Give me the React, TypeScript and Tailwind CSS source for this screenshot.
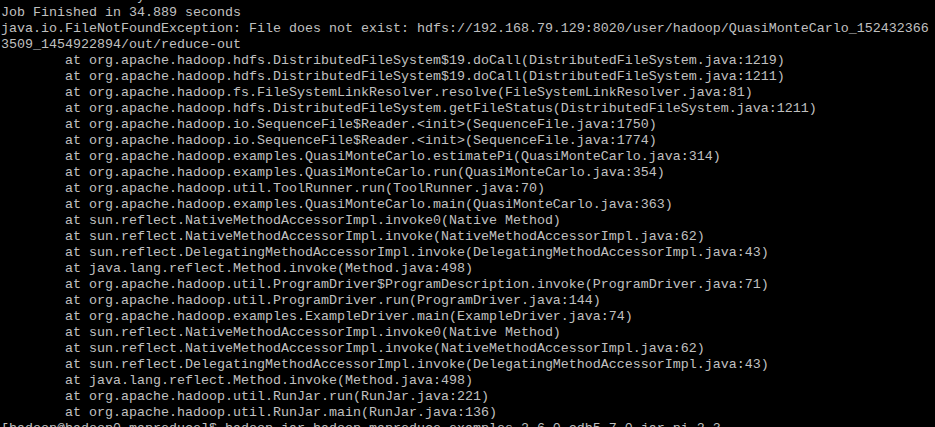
import React from "react";

const T = "        ";
const lines: string[] = [
  "Job Finished in 34.889 seconds",
  "java.io.FileNotFoundException: File does not exist: hdfs://192.168.79.129:8020/user/hadoop/QuasiMonteCarlo_152432366",
  "3509_1454922894/out/reduce-out",
  T + "at org.apache.hadoop.hdfs.DistributedFileSystem$19.doCall(DistributedFileSystem.java:1219)",
  T + "at org.apache.hadoop.hdfs.DistributedFileSystem$19.doCall(DistributedFileSystem.java:1211)",
  T + "at org.apache.hadoop.fs.FileSystemLinkResolver.resolve(FileSystemLinkResolver.java:81)",
  T + "at org.apache.hadoop.hdfs.DistributedFileSystem.getFileStatus(DistributedFileSystem.java:1211)",
  T + "at org.apache.hadoop.io.SequenceFile$Reader.<init>(SequenceFile.java:1750)",
  T + "at org.apache.hadoop.io.SequenceFile$Reader.<init>(SequenceFile.java:1774)",
  T + "at org.apache.hadoop.examples.QuasiMonteCarlo.estimatePi(QuasiMonteCarlo.java:314)",
  T + "at org.apache.hadoop.examples.QuasiMonteCarlo.run(QuasiMonteCarlo.java:354)",
  T + "at org.apache.hadoop.util.ToolRunner.run(ToolRunner.java:70)",
  T + "at org.apache.hadoop.examples.QuasiMonteCarlo.main(QuasiMonteCarlo.java:363)",
  T + "at sun.reflect.NativeMethodAccessorImpl.invoke0(Native Method)",
  T + "at sun.reflect.NativeMethodAccessorImpl.invoke(NativeMethodAccessorImpl.java:62)",
  T + "at sun.reflect.DelegatingMethodAccessorImpl.invoke(DelegatingMethodAccessorImpl.java:43)",
  T + "at java.lang.reflect.Method.invoke(Method.java:498)",
  T + "at org.apache.hadoop.util.ProgramDriver$ProgramDescription.invoke(ProgramDriver.java:71)",
  T + "at org.apache.hadoop.util.ProgramDriver.run(ProgramDriver.java:144)",
  T + "at org.apache.hadoop.examples.ExampleDriver.main(ExampleDriver.java:74)",
  T + "at sun.reflect.NativeMethodAccessorImpl.invoke0(Native Method)",
  T + "at sun.reflect.NativeMethodAccessorImpl.invoke(NativeMethodAccessorImpl.java:62)",
  T + "at sun.reflect.DelegatingMethodAccessorImpl.invoke(DelegatingMethodAccessorImpl.java:43)",
  T + "at java.lang.reflect.Method.invoke(Method.java:498)",
  T + "at org.apache.hadoop.util.RunJar.run(RunJar.java:221)",
  T + "at org.apache.hadoop.util.RunJar.main(RunJar.java:136)",
  "[hadoop@hadoop0 mapreduce]$ hadoop jar hadoop-mapreduce-examples-2.6.0-cdh5.7.0.jar pi 2 3",
];

export default function App() {
  return (
    <div className="w-[935px] h-[427px] overflow-hidden bg-black">
      <div
        className="pt-[5px] pl-[1px] text-[13.333px] leading-[16px] text-[#c0c0c0] whitespace-pre"
        style={{ fontFamily: '"Liberation Mono", "Courier New", monospace' }}
      >
        <div className="-mt-[16px]">{"                Bytes Written=97"}</div>
        {lines.map((l, i) => (
          <div key={i}>{l}</div>
        ))}
      </div>
    </div>
  );
}
